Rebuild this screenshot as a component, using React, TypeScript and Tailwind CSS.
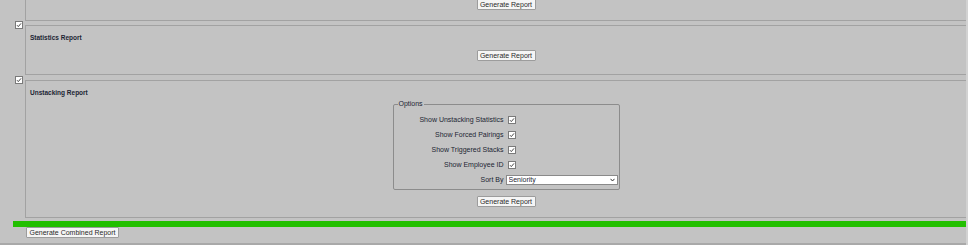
import React from "react";

const font = {fontFamily: '"Liberation Sans", Arial, sans-serif'};

function Check() {
	return (
		<span className="flex h-[8px] w-[8px] items-center justify-center border border-[#7a7a7a] bg-white">
			<svg width="6" height="6" viewBox="0 0 6 6">
				<path d="M1 3.2 L2.3 4.6 L5 1.4" fill="none" stroke="#333" strokeWidth="0.9" />
			</svg>
		</span>
	);
}

function Btn({label, w}: {label: string; w: string}) {
	return (
		<button
			className={`block h-[11px] ${w} rounded-[1px] border border-[#9c9c9c] bg-[#f5f5f5] text-[7px] leading-[9px] text-[#2a2a2a]`}
		>
			{label}
		</button>
	);
}

const options = ["Show Unstacking Statistics", "Show Forced Pairings", "Show Triggered Stacks", "Show Employee ID"];

export default function App() {
	return (
		<div className="flex h-[245px] w-[975px] bg-white text-[#1c2533] leading-none" style={font}>
			<div className="h-full w-[968px] border-r-2 border-[#d2d2d2] bg-[#c3c3c3] overflow-hidden">
				{/* previous report, top cut off */}
				<div className="ml-[25px] flex h-[21px] items-start justify-center border-b border-l border-[#a2a2a2] pl-[20px]">
					<div className="-mt-[1px]">
						<Btn label="Generate Report" w="w-[59px]" />
					</div>
				</div>

				{/* statistics */}
				<div className="flex items-start">
					<div className="ml-[15px]">
						<Check />
					</div>
					<div className="ml-[2px] mt-[4px] h-[50px] flex-1 border-y border-l border-[#a2a2a2]">
						<div className="pl-[4px] pt-[8px] text-[6.5px] font-bold leading-[8px]">Statistics Report</div>
						<div className="mt-[8px] flex justify-center pl-[20px]">
							<Btn label="Generate Report" w="w-[59px]" />
						</div>
					</div>
				</div>

				{/* unstacking */}
				<div className="flex items-start">
					<div className="ml-[15px] mt-[1px]">
						<Check />
					</div>
					<div className="ml-[2px] mt-[5px] h-[138px] flex-1 border-y border-l border-[#a2a2a2]">
						<div className="pl-[4px] pt-[8px] text-[6.5px] font-bold leading-[8px]">Unstacking Report</div>
						<div className="mt-[3px] flex flex-col items-center pl-[20px]">
							<fieldset className="w-[227px] rounded-[2px] border border-[#8c8c8c] pb-[2px]">
								<legend className="ml-[4px] px-[1px] text-[7px] leading-[8px]">Options</legend>
								<div className="grid grid-cols-[110px_1fr] gap-x-[2px] pt-[4px] text-[7px]">
									{options.map((o) => (
										<React.Fragment key={o}>
											<div className="flex h-[15px] items-center justify-end">{o}</div>
											<div className="flex h-[15px] items-center pl-[2px]">
												<Check />
											</div>
										</React.Fragment>
									))}
									<div className="flex h-[15px] items-center justify-end">Sort By</div>
									<div className="flex h-[15px] items-center">
										<div className="relative h-[10px] w-[112px]">
											<select className="block h-full w-full appearance-none border border-[#8a8a8a] bg-white pl-[2px] text-[7px] leading-[8px] text-[#1c2533]">
												<option>Seniority</option>
											</select>
											<svg
												className="pointer-events-none absolute right-[3px] top-[3px]"
												width="5"
												height="4"
												viewBox="0 0 5 4"
											>
												<path d="M0.5 0.8 L2.5 3 L4.5 0.8" fill="none" stroke="#333" strokeWidth="1" />
											</svg>
										</div>
									</div>
								</div>
							</fieldset>
							<div className="mt-[6px]">
								<Btn label="Generate Report" w="w-[59px]" />
							</div>
						</div>
					</div>
				</div>

				<div className="ml-[13px] mt-[3px] h-[6px] bg-[#22bf00]" />
				<div className="ml-[26px]">
					<Btn label="Generate Combined Report" w="w-[93px]" />
				</div>
				<div className="mt-[5px] border-b-[3px] border-[#a9a9a9]" />
			</div>
		</div>
	);
}
